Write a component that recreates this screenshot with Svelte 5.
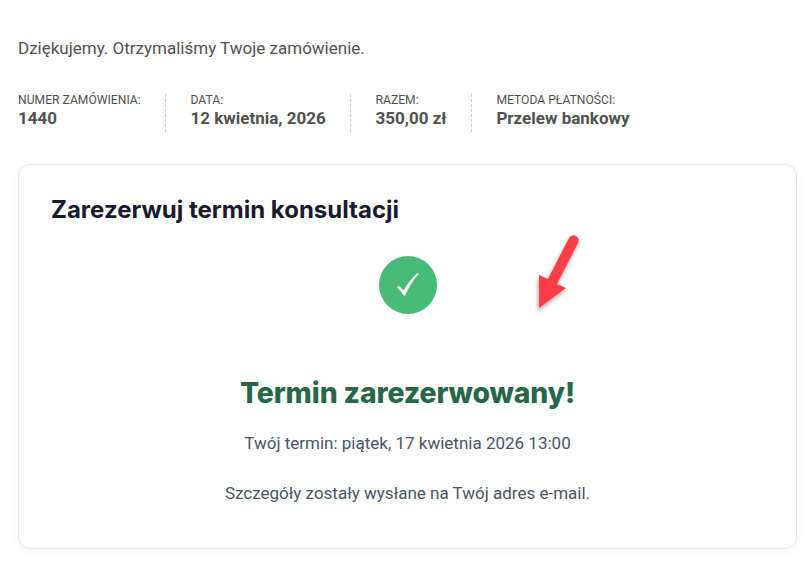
<script>
  const meta = [
    { label: 'NUMER ZAMÓWIENIA:', value: '1440' },
    { label: 'DATA:', value: '12 kwietnia, 2026' },
    { label: 'RAZEM:', value: '350,00 zł' },
    { label: 'METODA PŁATNOŚCI:', value: 'Przelew bankowy' }
  ];
</script>

<main class="page">
  <p class="thanks">Dziękujemy. Otrzymaliśmy Twoje zamówienie.</p>
  <ul class="meta">
    {#each meta as item}
      <li>
        <span class="label">{item.label}</span>
        <strong class="value">{item.value}</strong>
      </li>
    {/each}
  </ul>
  <section class="card">
    <h2>Zarezerwuj termin konsultacji</h2>
    <div class="circle">
      <svg width="24" height="26" viewBox="0 0 24 26" fill="none">
        <path d="M1 15.200 L2.800 13.800 L7.700 18.600 Q13 8.500 21.300 1 L22.700 2 Q14.200 11.500 9.300 23.400 L7.600 23.400 Q5 18.700 1 15.200 Z" fill="#fff"/>
      </svg>
    </div>
    <h1>Termin zarezerwowany!</h1>
    <p class="slot">Twój termin: piątek, 17 kwietnia 2026 13:00</p>
    <p class="note">Szczegóły zostały wysłane na Twój adres e-mail.</p>
  </section>
  <svg class="arrow" width="60" height="90" viewBox="0 0 60 90">
    <defs>
      <filter id="sh" x="-30%" y="-30%" width="160%" height="160%">
        <feDropShadow dx="-1" dy="3" stdDeviation="2.200" flood-color="#000" flood-opacity="0.35"/>
      </filter>
    </defs>
    <path d="M42 6 L21 47 L12 43 L12 76 L39 56 L30 52 L51 11 A5 5 0 0 0 42 6 Z" fill="#fc3d45" filter="url(#sh)"/>
  </svg>
</main>

<style>
  :global(body) {
    margin: 0;
    background: #fff;
    font-family: Roboto, "Liberation Sans", sans-serif;
    color: #515151;
  }
  .page {
    position: relative;
    width: 811px;
    height: 588px;
    box-sizing: border-box;
    padding: 39px 14px 0 18px;
    overflow: hidden;
  }
  .thanks {
    margin: 0;
    font-size: 17px;
    line-height: 19px;
  }
  .meta {
    display: flex;
    list-style: none;
    margin: 36px 0 0;
    padding: 0;
  }
  .meta li {
    display: flex;
    flex-direction: column;
    padding-right: 24px;
    margin-right: 24.800px;
    border-right: 1px dashed #d3ced2;
    height: 38px;
  }
  .meta li:last-child {
    border-right: none;
    margin-right: 0;
    padding-right: 0;
  }
  .label {
    font-size: 12.150px;
    line-height: 13px;
  }
  .value {
    font-size: 17px;
    line-height: 23px;
    font-weight: 700;
  }
  .card {
    margin-top: 32px;
    height: 385px;
    box-sizing: border-box;
    border: 1px solid #e6e6ef;
    border-radius: 12px;
    padding: 32px 32px 0;
    background: #fff;
    box-shadow: 0 2px 10px rgba(60, 60, 120, 0.04);
    text-align: center;
  }
  h2 {
    margin: 0;
    text-align: left;
    font-family: Inter, sans-serif;
    font-size: 24px;
    line-height: 26px;
    font-weight: 700;
    color: #1a1a2e;
  }
  .circle {
    width: 58px;
    height: 58px;
    border-radius: 50%;
    background: #48bb78;
    margin: 33px auto 0;
    display: flex;
    align-items: center;
    justify-content: center;
  }
  h1 {
    margin: 61px 0 0;
    font-family: Inter, sans-serif;
    font-size: 28.300px;
    line-height: 36px;
    font-weight: 800;
    letter-spacing: -0.1px;
    color: #276749;
  }
  .slot, .note {
    margin: 0;
    font-size: 17px;
    line-height: 19px;
    color: #4a5568;
  }
  .slot { margin-top: 23px; }
  .note { margin-top: 31px; }
  .arrow {
    position: absolute;
    left: 527px;
    top: 232px;
  }
</style>
